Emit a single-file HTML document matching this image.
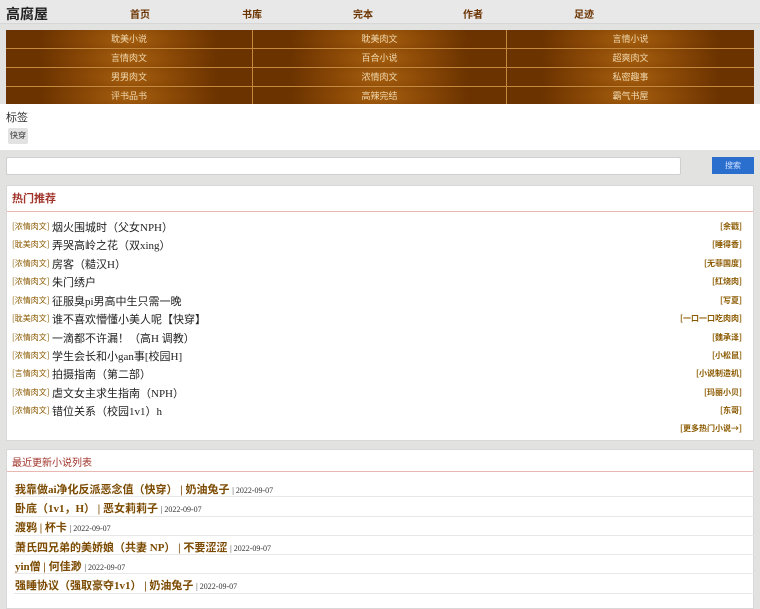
<!DOCTYPE html>
<html><head><meta charset="utf-8"><style>
*{margin:0;padding:0;box-sizing:border-box}
body{width:760px;height:600px;overflow:hidden;background:#e2e2e0;font-family:"Liberation Serif","Noto Serif CJK SC","Noto Sans CJK SC",serif;position:relative}
.a{position:absolute}
.hdr{left:0;top:0;width:760px;height:24px;background:#e8e8e8;border-bottom:1px solid #d6d6d6}
.logo{left:6px;top:4px;font:bold 14px "Liberation Sans","Noto Sans CJK SC",sans-serif;color:#222}
.nav{top:6px;font:bold 10px "Noto Sans CJK SC",sans-serif;color:#6b3300}
.grid{left:6px;top:30px;width:748px;height:74px;display:grid;grid-template-columns:246px 253px 247px;grid-template-rows:repeat(4,1fr);gap:1px;background:#c58a3c}
.grid div{background:radial-gradient(ellipse 90px 30px at 50% 50%,#a7600f 0%,#8a4806 50%,#6b3300 100%);color:#f0d8b0;font:9px "Noto Sans CJK SC",sans-serif;text-align:center;line-height:18px}
.white{left:0;top:104px;width:760px;height:46px;background:#fff}
.box{background:#fff;border:1px solid #d8d8d8}
.name{font:11px "Liberation Serif","Noto Sans CJK SC",serif;color:#222}
.r{right:18px;font:bold 8px "Noto Sans CJK SC",sans-serif;color:#8b5a00}
.c{font:8px "Noto Sans CJK SC",sans-serif;color:#8b5a00}
.rec{left:15px;font:bold 11px "Liberation Serif","Noto Sans CJK SC",serif;color:#7b4a00}
.rec span{font:normal 8px "Liberation Serif",serif;color:#333}
.ln{left:14px;width:740px;height:1px;background:#e8e8e8}
</style></head><body>
<div class="a hdr"></div>
<div class="a logo">高腐屋</div>
<div class="a nav" style="left:130px">首页</div>
<div class="a nav" style="left:242px">书库</div>
<div class="a nav" style="left:353px">完本</div>
<div class="a nav" style="left:463px">作者</div>
<div class="a nav" style="left:574px">足迹</div>
<div class="a grid">
<div>耽美小说</div><div>耽美肉文</div><div>言情小说</div>
<div>言情肉文</div><div>百合小说</div><div>超爽肉文</div>
<div>男男肉文</div><div>浓情肉文</div><div>私密趣事</div>
<div>评书品书</div><div>高辣完结</div><div>霸气书屋</div>
</div>
<div class="a white"></div>
<div class="a" style="left:6px;top:109px;font:11px 'Noto Sans CJK SC',sans-serif;color:#333">标签</div>
<div class="a" style="left:8px;top:128px;width:20px;height:16px;background:#e2e2e2;border-radius:2px;font:8px 'Noto Sans CJK SC',sans-serif;color:#333;text-align:center;line-height:16px">快穿</div>
<div class="a" style="left:6px;top:157px;width:675px;height:18px;background:#fff;border:1px solid #cfcfcf;border-radius:2px"></div>
<div class="a" style="left:712px;top:157px;width:42px;height:17px;background:#2a6fce;color:#cfe0ff;font:8px 'Noto Sans CJK SC',sans-serif;text-align:center;line-height:17px">搜索</div>

<div class="a box" style="left:6px;top:185px;width:748px;height:256px"></div>
<div class="a" style="left:12px;top:190px;font:bold 11px 'Noto Sans CJK SC',sans-serif;color:#a0332a">热门推荐</div>
<div class="a" style="left:7px;top:211px;width:746px;height:1px;background:#e8b8b0"></div>

<div class="a c" style="left:12px;top:221px">[浓情肉文]</div><div class="a name" style="left:52px;top:219px">烟火围城时（父女NPH）</div><div class="a r" style="top:221px">[余戳]</div>
<div class="a c" style="left:12px;top:239px">[耽美肉文]</div><div class="a name" style="left:52px;top:237px">弄哭高岭之花（双xing）</div><div class="a r" style="top:239px">[睡得香]</div>
<div class="a c" style="left:12px;top:258px">[浓情肉文]</div><div class="a name" style="left:52px;top:256px">房客（糙汉H）</div><div class="a r" style="top:258px">[无菲国度]</div>
<div class="a c" style="left:12px;top:276px">[浓情肉文]</div><div class="a name" style="left:52px;top:274px">朱门绣户</div><div class="a r" style="top:276px">[红烧肉]</div>
<div class="a c" style="left:12px;top:295px">[浓情肉文]</div><div class="a name" style="left:52px;top:293px">征服臭pi男高中生只需一晚</div><div class="a r" style="top:295px">[写夏]</div>
<div class="a c" style="left:12px;top:313px">[耽美肉文]</div><div class="a name" style="left:52px;top:311px">谁不喜欢懵懂小美人呢【快穿】</div><div class="a r" style="top:313px">[一口一口吃肉肉]</div>
<div class="a c" style="left:12px;top:332px">[浓情肉文]</div><div class="a name" style="left:52px;top:330px">一滴都不许漏！（高H 调教）</div><div class="a r" style="top:332px">[魏承泽]</div>
<div class="a c" style="left:12px;top:350px">[浓情肉文]</div><div class="a name" style="left:52px;top:348px">学生会长和小gan事[校园H]</div><div class="a r" style="top:350px">[小松鼠]</div>
<div class="a c" style="left:12px;top:368px">[言情肉文]</div><div class="a name" style="left:52px;top:366px">拍摄指南（第二部）</div><div class="a r" style="top:368px">[小说制造机]</div>
<div class="a c" style="left:12px;top:387px">[浓情肉文]</div><div class="a name" style="left:52px;top:385px">虐文女主求生指南（NPH）</div><div class="a r" style="top:387px">[玛丽小贝]</div>
<div class="a c" style="left:12px;top:405px">[浓情肉文]</div><div class="a name" style="left:52px;top:403px">错位关系（校园1v1）h</div><div class="a r" style="top:405px">[东哥]</div>
<div class="a r" style="top:423px">[更多热门小说→]</div>

<div class="a box" style="left:6px;top:449px;width:748px;height:160px"></div>
<div class="a" style="left:12px;top:454px;font:10px 'Noto Sans CJK SC',sans-serif;color:#a0332a">最近更新小说列表</div>
<div class="a" style="left:7px;top:471px;width:746px;height:1px;background:#e8b8b0"></div>
<div class="a rec" style="top:481px">我靠做ai净化反派恶念值（快穿） | 奶油兔子 <span>| 2022-09-07</span></div>
<div class="a ln" style="top:496px"></div>
<div class="a rec" style="top:500px">卧底（1v1，H） | 恶女莉莉子 <span>| 2022-09-07</span></div>
<div class="a ln" style="top:516px"></div>
<div class="a rec" style="top:519px">渡鸦 | 杯卡 <span>| 2022-09-07</span></div>
<div class="a ln" style="top:535px"></div>
<div class="a rec" style="top:539px">萧氏四兄弟的美娇娘（共妻 NP） | 不要涩涩 <span>| 2022-09-07</span></div>
<div class="a ln" style="top:554px"></div>
<div class="a rec" style="top:558px">yin僧 | 何佳渺 <span>| 2022-09-07</span></div>
<div class="a ln" style="top:573px"></div>
<div class="a rec" style="top:577px">强睡协议（强取豪夺1v1） | 奶油兔子 <span>| 2022-09-07</span></div>
<div class="a ln" style="top:593px"></div>
</body></html>
